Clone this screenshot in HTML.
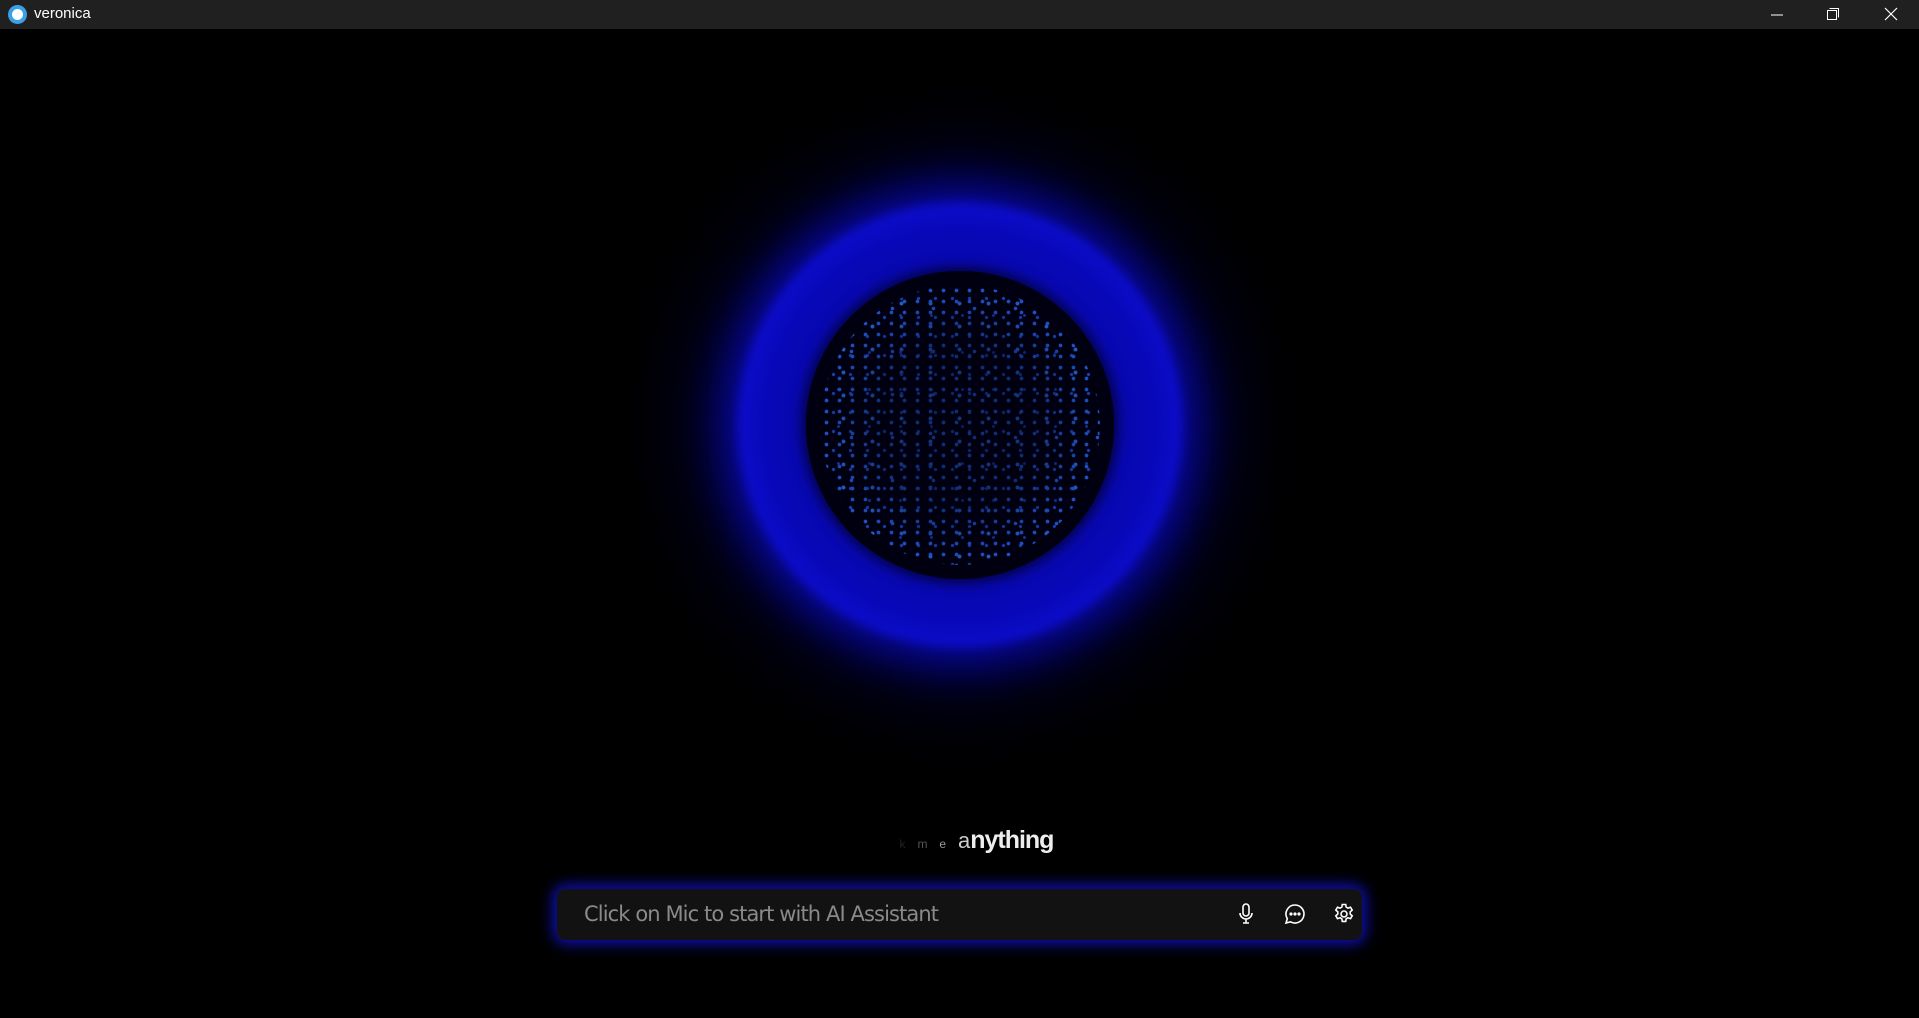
<!DOCTYPE html>
<html><head><meta charset="utf-8"><style>
*{margin:0;padding:0;box-sizing:border-box}
html,body{width:1919px;height:1018px;background:#000;overflow:hidden;font-family:"Liberation Sans",sans-serif}
.tb{position:absolute;left:0;top:0;width:1919px;height:29px;background:#202020;color:#fff;font-size:15px}
.tb .ic{position:absolute;left:8px;top:5px;width:19px;height:19px;border-radius:50%;background:#3aa0e8}
.tb .ic:after{content:"";position:absolute;left:4px;top:4px;width:11px;height:11px;border-radius:50%;background:#fff}
.tb .t{position:absolute;left:34px;top:5px}
.ring{position:absolute;left:737px;top:202px;width:446px;height:446px;border-radius:50%;
 background:radial-gradient(circle,#06068a 0,#0808b8 62%,#1212e6 80%,#1010dc 90%,rgba(16,16,200,0) 100%);
 box-shadow:0 0 40px 18px rgba(10,10,200,.7),0 0 90px 40px rgba(5,5,120,.45);filter:blur(5px)}
.planet{position:absolute;left:806px;top:271px;width:308px;height:308px;border-radius:50%;background:#000010;overflow:hidden;box-shadow:0 0 12px 4px rgba(0,0,40,.8)}
.dots{position:absolute;inset:14px;border-radius:50%;
 background:
 radial-gradient(circle,#2a6cff 1.6px,transparent 2.2px) 0 0/13px 11px,
 radial-gradient(circle,#1f55e6 1.3px,transparent 2px) 5px 4px/17px 19px,
 radial-gradient(circle,#3377ff 1.7px,transparent 2.3px) 9px 7px/29px 23px,
 radial-gradient(circle,#1a48cc 1.2px,transparent 1.8px) 3px 12px/31px 37px,
 radial-gradient(circle,#2a6cff 1.5px,transparent 2.1px) 11px 2px/41px 43px;
 -webkit-mask:radial-gradient(circle,rgba(0,0,0,.5) 40%,#000 78%,transparent 100%);opacity:.85}
.ask{position:absolute;left:0;width:1919px;padding-left:34px;top:826px;text-align:center;color:#eee;font-size:25px;font-weight:bold;letter-spacing:-1px}
.ask span{font-size:12px;font-weight:normal;letter-spacing:0}
.bar{position:absolute;left:557px;top:889px;width:805px;height:51px;border-radius:9px;background:#121212;
 box-shadow:0 0 14px 4px rgba(20,20,230,.8)}
.bar .p{position:absolute;left:27px;top:13px;color:#8a8a8a;font-size:21px;font-family:"Comic Sans MS","DejaVu Sans",sans-serif;letter-spacing:-.9px}
.bar svg{position:absolute;top:13px}
</style></head><body>
<div class="tb"><div class="ic"></div><div class="t">veronica</div>
<svg style="position:absolute;left:1770px;top:8px" width="14" height="14"><path d="M1 7h12" stroke="#fff"/></svg>
<svg style="position:absolute;left:1826px;top:7px" width="14" height="14"><rect x="1.5" y="3.5" width="9" height="9" fill="none" stroke="#fff"/><path d="M3.5 1.5h9v9" fill="none" stroke="#fff"/></svg>
<svg style="position:absolute;left:1884px;top:7px" width="14" height="14"><path d="M1 1L13 13M13 1L1 13" stroke="#fff" stroke-width="1.2"/></svg>
</div>
<div class="ring"></div>
<div class="planet"><div class="dots"></div></div>
<div class="ask"><span style="color:#222">k</span>&nbsp;&nbsp;<span style="color:#555">m</span>&nbsp;&nbsp;<span style="color:#999">e</span>&nbsp;&nbsp;<span style="font-size:22px;color:#ccc">a</span>nything</div>
<div class="bar"><div class="p">Click on Mic to start with AI Assistant</div>
<svg style="left:677px" width="24" height="24" viewBox="0 0 24 24" fill="none" stroke="#fff" stroke-width="1.6"><rect x="9" y="2" width="6" height="12" rx="3"/><path d="M6 11a6 6 0 0 0 12 0M12 17v4M9 21h6"/></svg>
<svg style="left:726px" width="24" height="24" viewBox="0 0 24 24" fill="none" stroke="#fff" stroke-width="1.6"><path d="M12 3a9 9 0 1 1-4.5 16.8L3 21l1.3-4.3A9 9 0 0 1 12 3z"/><circle cx="8" cy="12" r=".8" fill="#fff"/><circle cx="12" cy="12" r=".8" fill="#fff"/><circle cx="16" cy="12" r=".8" fill="#fff"/></svg>
<svg style="left:775px" width="24" height="24" viewBox="0 0 24 24" fill="none" stroke="#fff" stroke-width="1.6"><circle cx="12" cy="12" r="3"/><path d="M10.3 2.5h3.4l.5 2.6 1.8 1 2.5-.9 1.7 2.9-2 1.8v2.1l2 1.8-1.7 2.9-2.5-.9-1.8 1-.5 2.6h-3.4l-.5-2.6-1.8-1-2.5.9-1.7-2.9 2-1.8V9.9l-2-1.8 1.7-2.9 2.5.9 1.8-1z"/></svg>
</div>
</body></html>
